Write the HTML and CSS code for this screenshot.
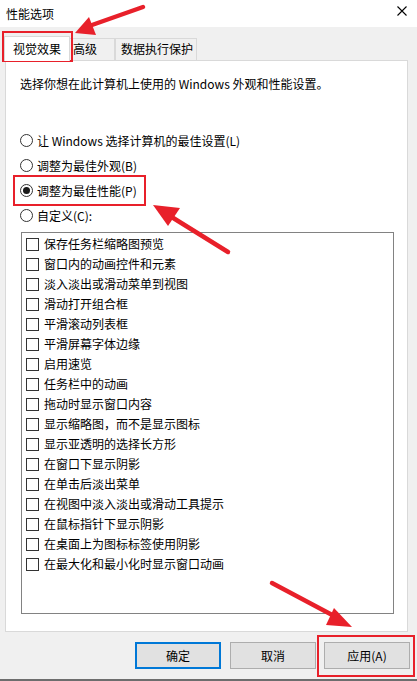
FILE: index.html
```html
<!DOCTYPE html>
<html lang="zh-CN">
<head>
<meta charset="utf-8">
<title>性能选项</title>
<link rel="stylesheet" href="styles.css">
</head>
<body>
<div class="window">
  <div class="titlebar">
    <span class="title">性能选项</span>
    <svg class="close" width="10" height="10" viewBox="0 0 10 10"><path d="M0.5 0.5L9.5 9.5M9.5 0.5L0.5 9.5" stroke="#000" stroke-width="1.1" fill="none"/></svg>
  </div>
  <div class="content">
    <div class="tabs">
      <div class="tab active">视觉效果</div>
      <div class="tab t2">高级</div>
      <div class="tab t3">数据执行保护</div>
    </div>
    <div class="panel">
      <p class="desc">选择你想在此计算机上使用的 Windows 外观和性能设置。</p>
      <div class="radios">
        <div class="radio"><span class="rb"></span>让 Windows 选择计算机的最佳设置(L)</div>
        <div class="radio"><span class="rb"></span>调整为最佳外观(B)</div>
        <div class="radio"><span class="rb on"></span>调整为最佳性能(P)</div>
        <div class="radio"><span class="rb"></span>自定义(C):</div>
      </div>
      <div class="list">
        <div class="item"><span class="cb"></span>保存任务栏缩略图预览</div>
        <div class="item"><span class="cb"></span>窗口内的动画控件和元素</div>
        <div class="item"><span class="cb"></span>淡入淡出或滑动菜单到视图</div>
        <div class="item"><span class="cb"></span>滑动打开组合框</div>
        <div class="item"><span class="cb"></span>平滑滚动列表框</div>
        <div class="item"><span class="cb"></span>平滑屏幕字体边缘</div>
        <div class="item"><span class="cb"></span>启用速览</div>
        <div class="item"><span class="cb"></span>任务栏中的动画</div>
        <div class="item"><span class="cb"></span>拖动时显示窗口内容</div>
        <div class="item"><span class="cb"></span>显示缩略图，而不是显示图标</div>
        <div class="item"><span class="cb"></span>显示亚透明的选择长方形</div>
        <div class="item"><span class="cb"></span>在窗口下显示阴影</div>
        <div class="item"><span class="cb"></span>在单击后淡出菜单</div>
        <div class="item"><span class="cb"></span>在视图中淡入淡出或滑动工具提示</div>
        <div class="item"><span class="cb"></span>在鼠标指针下显示阴影</div>
        <div class="item"><span class="cb"></span>在桌面上为图标标签使用阴影</div>
        <div class="item"><span class="cb"></span>在最大化和最小化时显示窗口动画</div>
      </div>
    </div>
    <div class="buttons">
      <div class="btn default">确定</div>
      <div class="btn">取消</div>
      <div class="btn">应用(A)</div>
    </div>
  </div>
  <svg class="overlay" width="417" height="681" viewBox="0 0 417 681">
    <g fill="none" stroke="#e8202a" stroke-width="2">
      <rect x="3" y="32" width="69" height="29"/>
      <rect x="14" y="176" width="131" height="29"/>
      <rect x="318" y="636" width="96" height="40"/>
    </g>
    <g stroke="#e8202a" stroke-width="4.5" stroke-linecap="round">
      <line x1="143" y1="7" x2="92" y2="25"/>
      <line x1="228" y1="252" x2="170" y2="216"/>
      <line x1="272" y1="583" x2="336" y2="617"/>
    </g>
    <g fill="#e8202a">
      <polygon points="75,33 89,17 96,35"/>
      <polygon points="153,205 180,208 168,226"/>
      <polygon points="352,627 334,608 326,625"/>
    </g>
  </svg>
</div>
</body>
</html>
```

FILE: styles.css
```css
* { box-sizing: border-box; }
html, body { margin: 0; padding: 0; }
body {
  width: 417px;
  height: 681px;
  background: #f0f0f0;
  font-family: "Noto Sans CJK SC", "Noto Sans", sans-serif;
  font-size: 12px;
  color: #000;
  overflow: hidden;
}
.window {
  position: relative;
  width: 417px;
  height: 681px;
  background: #f0f0f0;
  border-bottom: 2px solid #6d6d6d;
}
.titlebar {
  height: 27px;
  background: #fff;
  display: flex;
  align-items: center;
  justify-content: space-between;
  padding: 0 10px 0 6px;
}
.title { line-height: 16px; }
.close { display: block; margin-bottom: 5px; }
.content { padding-left: 5px; }
.tabs {
  height: 33px;
  display: flex;
  align-items: flex-end;
  margin-left: -1px;
}
.tab {
  height: 22px;
  border: 1px solid #d9d9d9;
  border-bottom: none;
  line-height: 20px;
  background: #f0f0f0;
}
.tab.active {
  position: relative;
  z-index: 2;
  width: 66px;
  height: 25px;
  margin-bottom: -1px;
  background: #fff;
  padding-left: 8px;
  line-height: 23px;
}
.tab.t2 {
  width: 45px;
  border-left: none;
  padding-left: 3px;
}
.tab.t3 {
  width: 82px;
  padding-left: 5px;
}
.panel {
  width: 403px;
  height: 572px;
  background: #fff;
  border: 1px solid #d9d9d9;
  padding: 15px 12px 0 14px;
}
.desc {
  margin: 0;
  line-height: 16px;
}
.radios { margin-top: 36px; }
.radio {
  height: 25px;
  display: flex;
  align-items: center;
  gap: 4px;
  line-height: 16px;
}
.rb {
  width: 13px;
  height: 13px;
  border: 1px solid #333;
  border-radius: 50%;
  background: #fff;
  display: flex;
  align-items: center;
  justify-content: center;
}
.rb.on::after {
  content: "";
  width: 7px;
  height: 7px;
  border-radius: 50%;
  background: #1a1a1a;
}
.list {
  margin: 4px 0 0 1px;
  width: 373px;
  height: 382px;
  border: 1px solid #828282;
  padding: 1px 0 0 4px;
}
.item {
  height: 20px;
  display: flex;
  align-items: center;
  gap: 5px;
  line-height: 16px;
}
.cb {
  width: 13px;
  height: 13px;
  border: 1px solid #333;
  background: #fff;
}
.buttons {
  margin-top: 10px;
  display: flex;
  justify-content: flex-end;
  padding-right: 7px;
  gap: 8px;
}
.btn {
  width: 86px;
  height: 27px;
  background: #e1e1e1;
  border: 1px solid #adadad;
  display: flex;
  align-items: center;
  justify-content: center;
  line-height: 16px;
}
.btn.default {
  border: 2px solid #0078d7;
  margin-right: 1px;
}
.overlay {
  position: absolute;
  left: 0;
  top: 0;
  pointer-events: none;
}
```
